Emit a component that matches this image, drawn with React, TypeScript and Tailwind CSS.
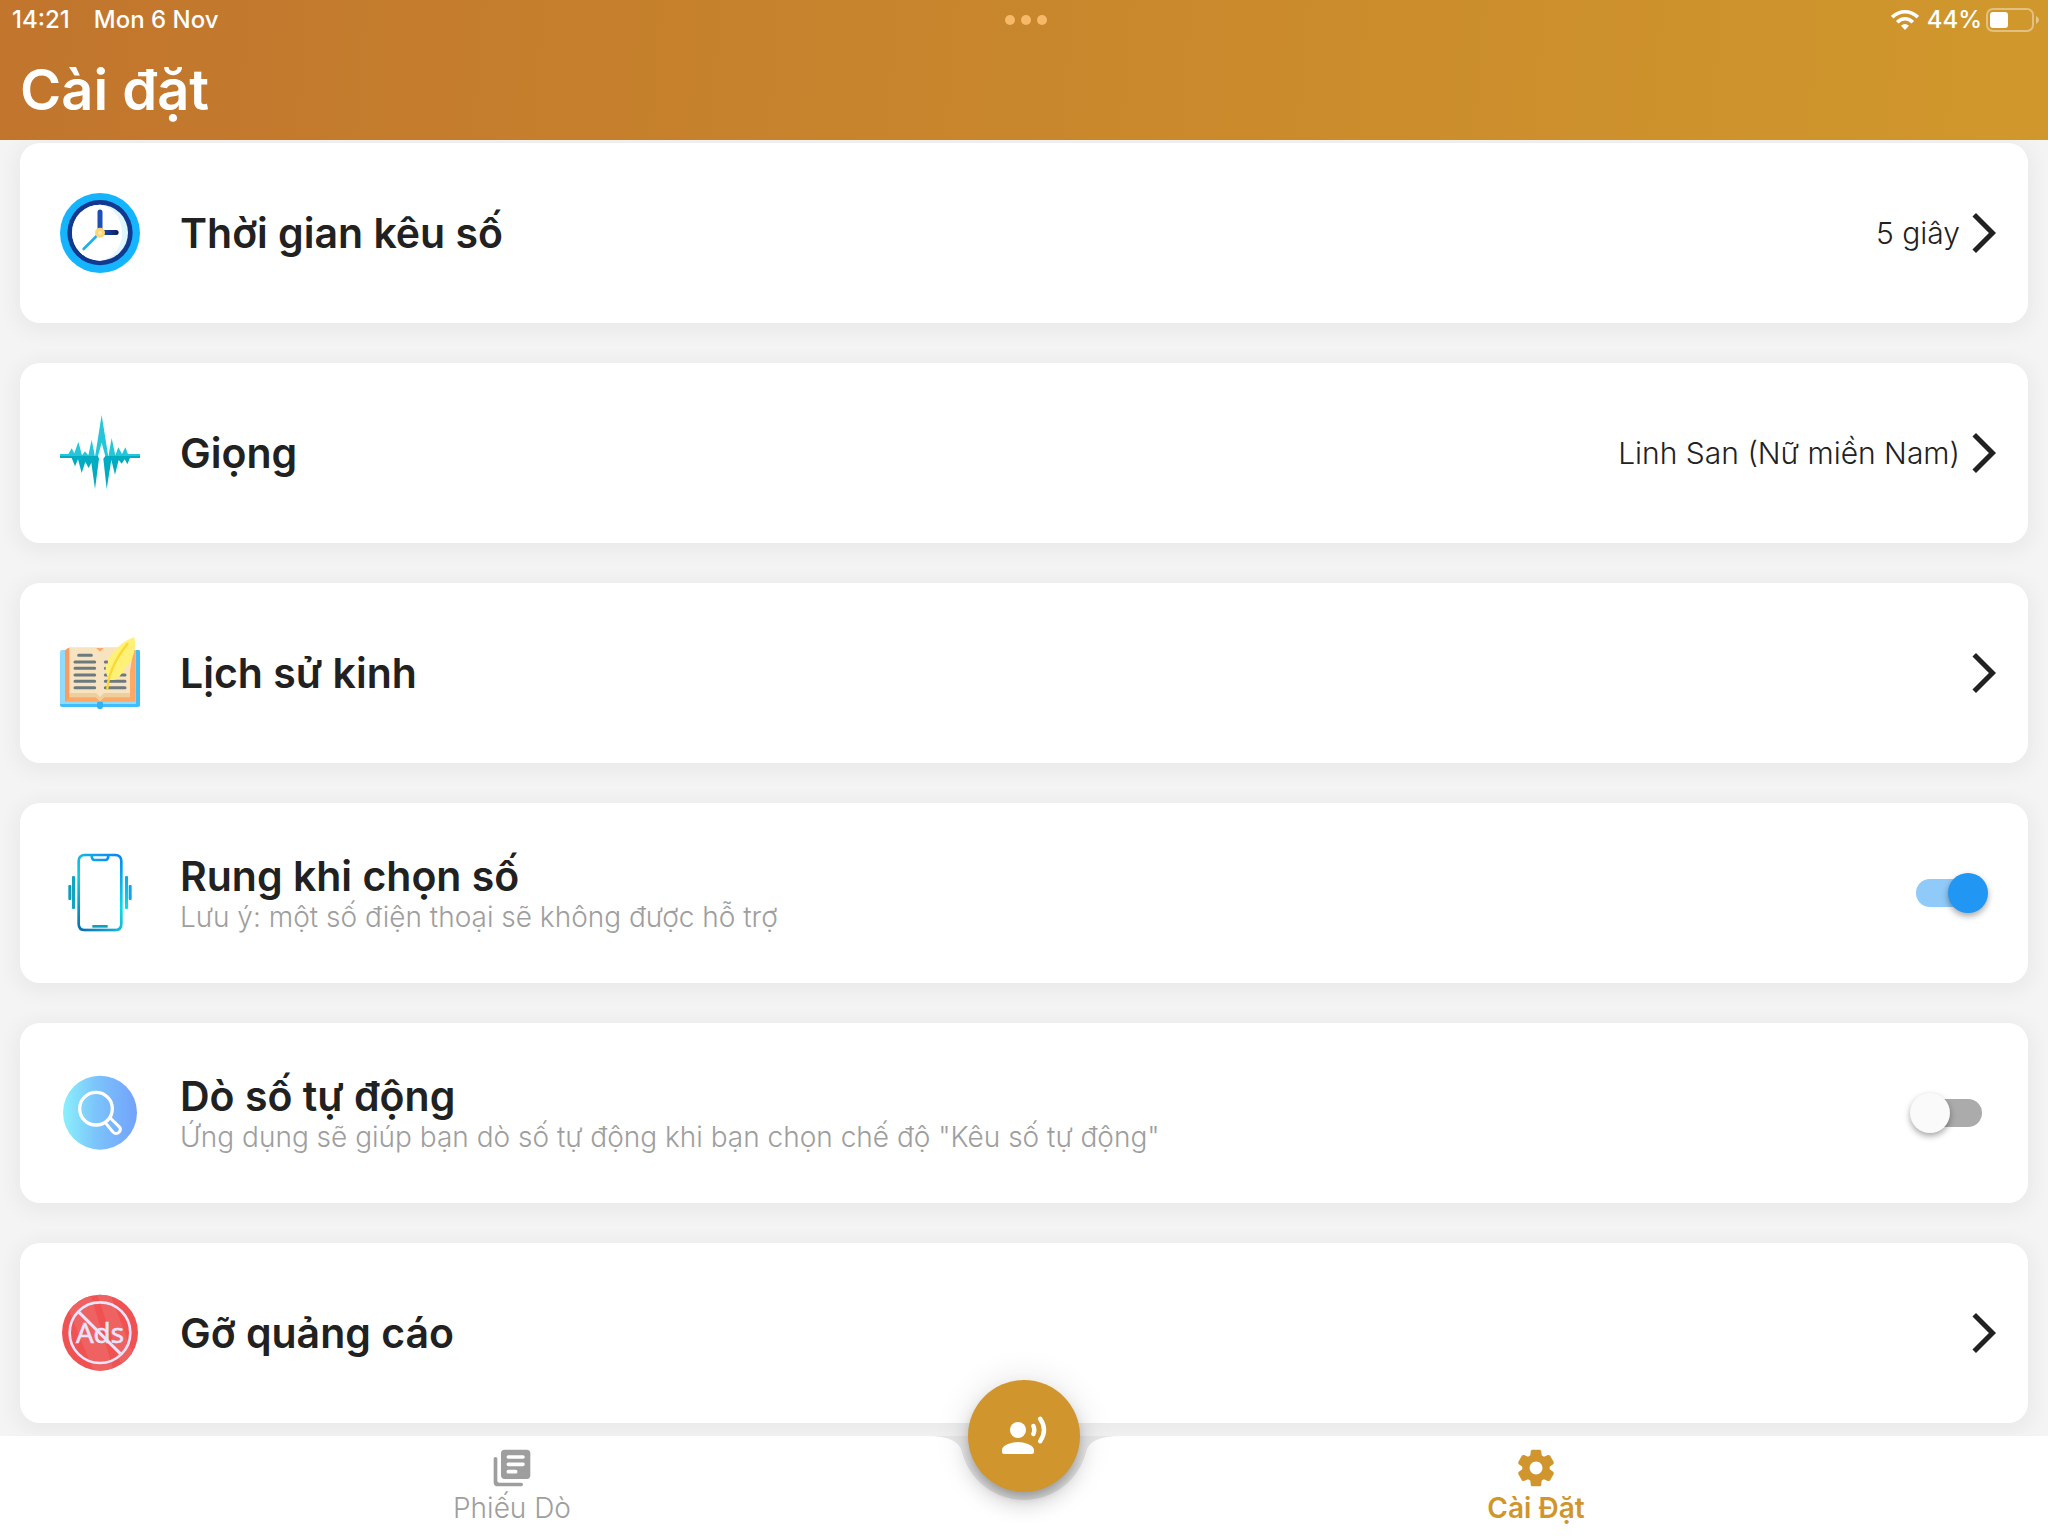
import { useState } from "react";
import type { ReactNode } from "react";

function ClockIcon() {
  return (
    <svg viewBox="60 69 240 240" className="h-20 w-20 shrink-0" aria-hidden="true">
      <defs>
        <linearGradient id="hourHand" x1="0" x2="1">
          <stop offset="0" stopColor="#1f52b8" />
          <stop offset="1" stopColor="#0c1d5c" />
        </linearGradient>
      </defs>
      <circle cx="180" cy="189" r="120" fill="#14b4ff" />
      <circle cx="180" cy="188" r="98" fill="#12398f" />
      <circle cx="180" cy="188" r="84" fill="#dff6ff" />
      <path d="M180 104a84 84 0 1 0 0 168c44-8 66-44 66-84s-22-76-66-84z" fill="#fff" />
      <path d="M180 126v60" stroke="#1d4fb8" strokeWidth="15" strokeLinecap="round" />
      <rect x="180" y="180" width="56" height="15" rx="7.5" fill="url(#hourHand)" />
      <path d="M180 188l-49 49" stroke="#18b0f2" strokeWidth="8" strokeLinecap="round" />
      <circle cx="180" cy="188" r="15" fill="#fcd575" />
      <circle cx="180" cy="188" r="6" fill="#ffe9b0" />
    </svg>
  );
}

function WaveIcon() {
  return (
    <svg viewBox="60 39 240 240" className="h-20 w-20 shrink-0" aria-hidden="true">
      <path
        fill="#26c6da"
        d="M60 162H85L95 145L103 160L115 125L126 166L135 154L145 166L155 119L165 170L185 45L205 170L215 114L226 166L235 142L246 162L256 142L264 162H300V169H196L185 128L174 169H60Z"
      />
      <path
        fill="#00acc1"
        d="M60 168H174L177 176L165 267L154 188L146 204L136 186L125 219L114 178L105 199L95 174H60ZM196 168H300V174H270L262 193L254 178L245 191L236 180L225 224L214 180L200 267L190 176Z"
      />
    </svg>
  );
}

function BookIcon() {
  return (
    <svg viewBox="60 39 240 240" className="h-20 w-20 shrink-0" aria-hidden="true">
      <rect x="60" y="90" width="240" height="170" rx="7" fill="#8edcfa" />
      <path d="M288 90h8q4 0 4 5v160q0 6-6 6H66q-6 0-6-9h228z" fill="#40bdfa" />
      <rect x="171" y="243" width="18" height="24" rx="7" fill="#33b2f2" />
      <path d="M75 94q3-9 14-11h182q12 2 15 11v151H75z" fill="#fea868" />
      <path d="M75 94q3-9 14-11v148l-14 14z" fill="#ff9a5e" />
      <path d="M88 83h80l12 12 12-12h78v148h-78l-12 13-12-13H88z" fill="#f7e3c0" />
      <path d="M88 219h80l12 12 12-12h78v13h-78l-12 12-12-12H88z" fill="#edcf9e" />
      <path
        d="M116 106h38M105 126h59M105 145h59M105 165h59M105 184h59M105 203h59M196 126h59M196 145h59M196 165h59M196 184h59M196 203h59"
        stroke="#6c7a80"
        strokeWidth="9"
        strokeLinecap="round"
      />
      <path d="M206 112h60v-23h14l-10 65h-20l-18 24h-16z" fill="#f7e3c0" />
      <path
        d="M283 51q7 33-7 65-8 20-24 28 4 8-3 14-11 5-12 15-12 9-27 7-13-15-13-35-2-10 7-15-3-15 8-22 25-41 71-57z"
        fill="#fff176"
      />
      <path d="M202 206q5-65 60-134" fill="none" stroke="#fdd835" strokeWidth="7" strokeLinecap="round" />
    </svg>
  );
}

function PhoneIcon() {
  return (
    <svg viewBox="60 39 240 240" className="h-20 w-20 shrink-0" fill="none" aria-hidden="true">
      <defs>
        <linearGradient id="phoneLeft" x1="0" y1="40" x2="0" y2="274" gradientUnits="userSpaceOnUse">
          <stop offset="0" stopColor="#10b5e6" />
          <stop offset="0.3" stopColor="#08cfe0" />
          <stop offset="1" stopColor="#086eb0" />
        </linearGradient>
        <linearGradient id="phoneRight" x1="0" y1="40" x2="0" y2="274" gradientUnits="userSpaceOnUse">
          <stop offset="0" stopColor="#0a84f5" />
          <stop offset="0.7" stopColor="#06dce6" />
          <stop offset="1" stopColor="#14b4dc" />
        </linearGradient>
        <linearGradient id="phoneEdge" x1="115" y1="0" x2="245" y2="0" gradientUnits="userSpaceOnUse">
          <stop offset="0" stopColor="#10b5e6" />
          <stop offset="1" stopColor="#0a84f5" />
        </linearGradient>
        <linearGradient id="phoneBase" x1="115" y1="0" x2="245" y2="0" gradientUnits="userSpaceOnUse">
          <stop offset="0" stopColor="#086eb0" />
          <stop offset="1" stopColor="#14b4dc" />
        </linearGradient>
      </defs>
      <path d="M135 45q-19 0-19 19v187q0 19 19 19" stroke="url(#phoneLeft)" strokeWidth="8" />
      <path d="M225 45q19 0 19 19v187q0 19-19 19" stroke="url(#phoneRight)" strokeWidth="8" />
      <path d="M134 45h92M155 45q0 15 9 15h32q9 0 9-15" stroke="url(#phoneEdge)" strokeWidth="8" />
      <path d="M134 270h92" stroke="url(#phoneBase)" strokeWidth="8" />
      <rect x="157" y="255" width="46" height="8" fill="#129fbd" />
      <rect x="96" y="108" width="9" height="99" rx="3" fill="#12a5c0" />
      <rect x="85" y="135" width="9" height="45" rx="3" fill="#129cbb" />
      <rect x="255" y="108" width="9" height="99" rx="3" fill="url(#phoneRight)" />
      <rect x="266" y="135" width="9" height="45" rx="3" fill="#0ea4ee" />
    </svg>
  );
}

function SearchIcon() {
  return (
    <svg viewBox="60 54 240 240" className="h-20 w-20 shrink-0" fill="none" aria-hidden="true">
      <defs>
        <linearGradient id="searchBg" x1="0" x2="1">
          <stop offset="0" stopColor="#8af0fc" />
          <stop offset="0.45" stopColor="#7cc3fb" />
          <stop offset="1" stopColor="#72a2fb" />
        </linearGradient>
      </defs>
      <circle cx="180" cy="173" r="111" fill="url(#searchBg)" />
      <circle cx="168" cy="161" r="49" stroke="#fff" strokeWidth="10" />
      <path
        d="M196 203l23 28q7 7 15 3 10-6 6-16l-29-29"
        stroke="#fff"
        strokeWidth="9"
        strokeLinejoin="round"
      />
    </svg>
  );
}

function NoAdsIcon() {
  return (
    <svg viewBox="60 54 240 240" className="h-20 w-20 shrink-0" fill="none" aria-hidden="true">
      <defs>
        <clipPath id="adsClip">
          <circle cx="180" cy="173" r="114" />
        </clipPath>
      </defs>
      <circle cx="180" cy="173" r="114" fill="#f05252" />
      <g clipPath="url(#adsClip)" fill="#ef6262">
        <path d="M84 100L152 60l70 230h-60z" />
        <path d="M170 55h40l72 190-36 30z" />
      </g>
      <text
        x="180"
        y="204"
        textAnchor="middle"
        fontSize="84"
        fill="#e8e4fb"
        stroke="#e8e4fb"
        strokeWidth="2"
        className="font-['Open_Sans',sans-serif]"
      >
        Ads
      </text>
      <circle cx="180" cy="173" r="91" stroke="#e8e4fb" strokeWidth="8" />
      <path d="M115 110l126 126" stroke="#e8e4fb" strokeWidth="9" />
    </svg>
  );
}

function ChevronIcon() {
  return (
    <svg viewBox="0 0 24 24" className="h-12 w-12 shrink-0 fill-[#212121]" aria-hidden="true">
      <path d="M6.23 20.23L8 22l10-10L8 2 6.23 3.77 14.46 12z" />
    </svg>
  );
}

function LibraryIcon() {
  return (
    <svg viewBox="0 0 24 24" className="h-11 w-11 fill-current" aria-hidden="true">
      <path d="M3 6c-.55 0-1 .45-1 1v13c0 1.1.9 2 2 2h13c.55 0 1-.45 1-1s-.45-1-1-1H5c-.55 0-1-.45-1-1V7c0-.55-.45-1-1-1z" />
      <rect x="6" y="2" width="16" height="16" rx="2" />
      <path d="M10 6h8M10 10h8M10 14h4" stroke="#fff" strokeWidth="2" strokeLinecap="round" />
    </svg>
  );
}

function SettingsIcon() {
  return (
    <svg viewBox="0 0 24 24" className="h-11 w-11 fill-current" aria-hidden="true">
      <path d="M19.5 12c0-.23-.01-.45-.03-.68l1.86-1.41c.4-.3.51-.86.26-1.3l-1.87-3.23c-.25-.44-.79-.62-1.25-.42l-2.15.91c-.37-.26-.76-.49-1.17-.68l-.29-2.31c-.06-.5-.49-.88-.99-.88h-3.73c-.51 0-.94.38-1 .88l-.29 2.31c-.41.19-.8.42-1.17.68l-2.15-.91c-.46-.2-1-.02-1.25.42L2.41 8.62c-.25.44-.14.99.26 1.3l1.86 1.41c-.02.22-.03.44-.03.67s.01.45.03.68l-1.86 1.41c-.4.3-.51.86-.26 1.3l1.87 3.23c.25.44.79.62 1.25.42l2.15-.91c.37.26.76.49 1.17.68l.29 2.31c.06.5.49.88.99.88h3.73c.5 0 .93-.38.99-.88l.29-2.31c.41-.19.8-.42 1.17-.68l2.15.91c.46.2 1 .02 1.25-.42l1.87-3.23c.25-.44.14-.99-.26-1.3l-1.86-1.41c.03-.23.04-.45.04-.68zm-7.46 3.5c-1.93 0-3.5-1.57-3.5-3.5s1.57-3.5 3.5-3.5 3.5 1.57 3.5 3.5-1.57 3.5-3.5 3.5z" />
    </svg>
  );
}

function VoiceIcon() {
  return (
    <svg viewBox="0 0 24 24" className="h-12 w-12 fill-white" aria-hidden="true">
      <circle cx="9" cy="9" r="4" />
      <path d="M9 15c-2.67 0-8 1.34-8 4v1c0 .55.45 1 1 1h14c.55 0 1-.45 1-1v-1c0-2.66-5.33-4-8-4z" />
      <path
        d="M16.7 7q.9 2 0 4M20.1 3.4q3.8 5.6 0 11.2"
        fill="none"
        stroke="#fff"
        strokeWidth="2.2"
        strokeLinecap="round"
      />
    </svg>
  );
}

const cardClass =
  "flex min-h-[180px] w-full items-center rounded-[20px] bg-white pr-5 pl-10 text-left shadow-[0_4px_20px_6px_rgba(0,0,0,0.045)]";
const titleClass = "block text-[41px] leading-12 font-semibold text-[#212121]";

type LinkRowProps = { icon: ReactNode; title: string; value?: string };

function LinkRow({ icon, title, value }: LinkRowProps) {
  return (
    <li>
      <button type="button" className={cardClass}>
        {icon}
        <span className="ml-10 flex-1">
          <span className={titleClass}>{title}</span>
        </span>
        {value && <span className="text-[30px] font-light text-[#212121]">{value}</span>}
        <ChevronIcon />
      </button>
    </li>
  );
}

type SwitchRowProps = {
  id: string;
  icon: ReactNode;
  title: string;
  note: string;
  defaultOn: boolean;
};

function SwitchRow({ id, icon, title, note, defaultOn }: SwitchRowProps) {
  const [on, setOn] = useState(defaultOn);

  return (
    <li className={cardClass}>
      {icon}
      <label htmlFor={id} className="ml-10 flex-1">
        <span className={titleClass}>{title}</span>
        <span className="block text-[28px] leading-[34px] font-light text-[#9e9e9e]">{note}</span>
      </label>
      <input
        id={id}
        type="checkbox"
        role="switch"
        checked={on}
        onChange={(e) => setOn(e.target.checked)}
        className="mr-[26px] flex h-7 w-[66px] shrink-0 appearance-none items-center rounded-full bg-[#ababab] before:h-10 before:w-10 before:shrink-0 before:-translate-x-[6px] before:rounded-full before:bg-[#fafafa] before:shadow-[0_3px_6px_rgba(0,0,0,0.35)] checked:bg-[#90caf9] checked:before:translate-x-8 checked:before:bg-[#2196f3]"
      />
    </li>
  );
}

function StatusBar() {
  return (
    <div className="grid h-10 grid-cols-3 items-center pr-2 pl-3 text-2xl font-medium">
      <div className="flex gap-6">
        <span>14:21</span>
        <span>Mon 6 Nov</span>
      </div>
      <div className="flex justify-center gap-1.5">
        <span className="h-2.5 w-2.5 rounded-full bg-[#f5b968]" />
        <span className="h-2.5 w-2.5 rounded-full bg-[#f5b968]" />
        <span className="h-2.5 w-2.5 rounded-full bg-[#f5b968]" />
      </div>
      <div className="flex items-center justify-end">
        <svg viewBox="0 0 28 20" className="mr-2 h-5 w-7" fill="none" stroke="#fff" aria-hidden="true">
          <path d="M1.2 7.2Q7 1.8 14 1.8t12.8 5.4" strokeWidth="3.6" />
          <path d="M6.2 12.2Q9.6 8.8 14 8.8t7.8 3.4" strokeWidth="3.6" />
          <path d="M14 20l-4-4.2q4-3.4 8 0z" fill="#fff" stroke="none" />
        </svg>
        <span>44%</span>
        <svg viewBox="0 0 54 24" className="ml-1 h-6 w-[54px]" aria-hidden="true">
          <rect x="1" y="1" width="46" height="22" rx="6" fill="none" stroke="#fff" strokeOpacity="0.4" strokeWidth="2" />
          <rect x="4" y="4" width="18" height="16" rx="3" fill="#fff" />
          <path d="M50 8q3 1.5 3 4t-3 4z" fill="#fff" fillOpacity="0.45" />
        </svg>
      </div>
    </div>
  );
}

function BottomNav() {
  return (
    <nav className="relative -mt-[27px] grid">
      {/* white bar with a notch cut out around the round button */}
      <div className="col-start-1 row-start-1 flex">
        <div className="flex-1 bg-white" />
        <svg viewBox="0 0 248 100" className="h-[100px] w-[248px] shrink-0" aria-hidden="true">
          <path d="M28 0H220V27H28z" fill="#000" fillOpacity="0.04" />
          <path d="M60 27H188V64H60z" fill="#e9e9e9" />
          <path
            d="M0 0H28Q58 0 61.94 15.63A64 64 0 0 0 186.06 15.63Q190 0 220 0H248V100H0Z"
            fill="#fff"
          />
        </svg>
        <div className="flex-1 bg-white" />
      </div>
      <div className="z-10 col-start-1 row-start-1 grid grid-cols-2 pt-2.5 text-[28px] leading-9">
        <a href="#phieu-do" className="flex flex-col items-center font-light text-[#9e9e9e]">
          <LibraryIcon />
          Phiếu Dò
        </a>
        <a href="#cai-dat" aria-current="page" className="flex flex-col items-center font-semibold text-[#d0962d]">
          <SettingsIcon />
          Cài Đặt
        </a>
      </div>
      <button
        type="button"
        aria-label="Kêu số"
        className="absolute -top-14 left-1/2 z-20 flex h-28 w-28 -translate-x-1/2 items-center justify-center rounded-full bg-[#d0962d] shadow-[0_6px_10px_-2px_rgba(0,0,0,0.2),0_12px_20px_rgba(0,0,0,0.14),0_2px_36px_rgba(0,0,0,0.12)]"
      >
        <VoiceIcon />
      </button>
    </nav>
  );
}

export default function App() {
  return (
    <div className="flex min-h-screen flex-col overflow-hidden bg-white font-[Inter,'Noto_Sans',sans-serif]">
      <header className="relative z-10 bg-linear-[95deg,#c1752d,#d0982c] text-white">
        <StatusBar />
        <h1 className="flex h-25 items-center px-5 text-[56px] font-semibold">Cài đặt</h1>
      </header>

      <main className="flex-1 bg-[#f4f4f4]">
        <ul className="flex flex-col gap-10 px-5 pt-[3px] pb-10">
          <LinkRow icon={<ClockIcon />} title="Thời gian kêu số" value="5 giây" />
          <LinkRow icon={<WaveIcon />} title="Giọng" value="Linh San (Nữ miền Nam)" />
          <LinkRow icon={<BookIcon />} title="Lịch sử kinh" />
          <SwitchRow
            id="vibrate"
            icon={<PhoneIcon />}
            title="Rung khi chọn số"
            note="Lưu ý: một số điện thoại sẽ không được hỗ trợ"
            defaultOn
          />
          <SwitchRow
            id="auto-check"
            icon={<SearchIcon />}
            title="Dò số tự động"
            note={'Ứng dụng sẽ giúp bạn dò số tự động khi bạn chọn chế độ "Kêu số tự động"'}
            defaultOn={false}
          />
          <LinkRow icon={<NoAdsIcon />} title="Gỡ quảng cáo" />
        </ul>
      </main>

      <BottomNav />
    </div>
  );
}
